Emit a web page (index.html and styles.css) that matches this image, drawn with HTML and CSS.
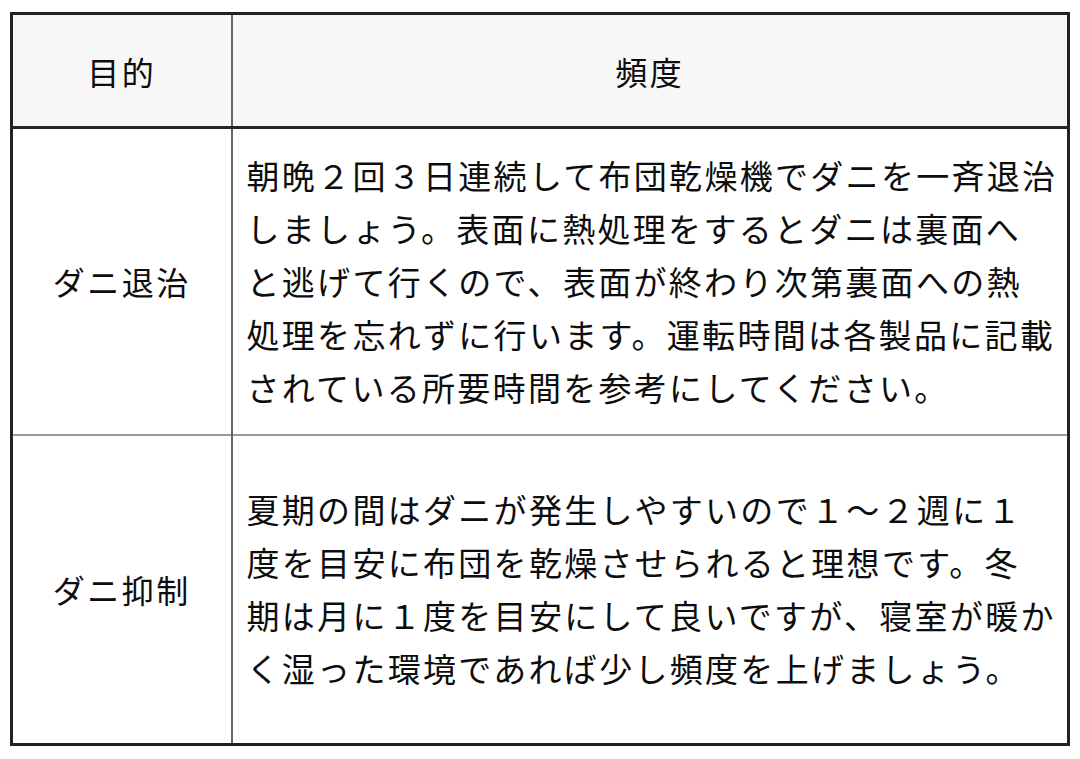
FILE: index.html
```html
<!DOCTYPE html>
<html lang="ja">
<head>
<meta charset="utf-8">
<link rel="stylesheet" href="styles.css">
</head>
<body>
<table class="freq-table">
  <colgroup>
    <col class="col-purpose">
    <col class="col-freq">
  </colgroup>
  <thead>
    <tr class="head-row">
      <th class="head-cell">目的</th>
      <th class="head-cell">頻度</th>
    </tr>
  </thead>
  <tbody>
    <tr class="row-first">
      <td class="label-cell">ダニ退治</td>
      <td class="text-cell">朝晩２回３日連続して布団乾燥機でダニを一斉退治<br>しましょう。表面に熱処理をするとダニは裏面へ<br>と逃げて行くので、表面が終わり次第裏面への熱<br>処理を忘れずに行います。運転時間は各製品に記載<br>されている所要時間を参考にしてください。</td>
    </tr>
    <tr class="row-second">
      <td class="label-cell">ダニ抑制</td>
      <td class="text-cell">夏期の間はダニが発生しやすいので１～２週に１<br>度を目安に布団を乾燥させられると理想です。冬<br>期は月に１度を目安にして良いですが、寝室が暖か<br>く湿った環境であれば少し頻度を上げましょう。</td>
    </tr>
  </tbody>
</table>
</body>
</html>
```

FILE: styles.css
```css
html, body {
  margin: 0;
  padding: 0;
  background: #ffffff;
}

body {
  padding: 12px 0 0 10px;
  font-family: "Noto Sans CJK JP", "Noto Sans", sans-serif;
  color: #0d0d0d;
}

.freq-table {
  border-collapse: collapse;
  width: 1060px;
  border: 3px solid #222222;
  table-layout: fixed;
}

.col-purpose {
  width: 220px;
}

.head-row {
  height: 114px;
  background: #f7f7f7;
}

.head-cell {
  font-weight: 400;
  font-size: 32px;
  letter-spacing: 2.5px;
  text-align: center;
  vertical-align: middle;
  padding: 0;
  border-bottom: 3px solid #262626;
  border-left: 2px solid #666666;
}

.head-cell:first-child {
  border-left: none;
}

.label-cell {
  font-weight: 400;
  font-size: 32px;
  letter-spacing: 2.5px;
  text-align: center;
  vertical-align: middle;
  padding: 0;
  border-right: 2px solid #666666;
}

.text-cell {
  font-weight: 400;
  font-size: 33px;
  letter-spacing: 2.3px;
  line-height: 53px;
  white-space: nowrap;
  padding: 0 0 0 14px;
  vertical-align: middle;
}

.row-first {
  height: 307px;
  border-bottom: 2px solid #9a9a9a;
}

.row-second {
  height: 310px;
}
```
